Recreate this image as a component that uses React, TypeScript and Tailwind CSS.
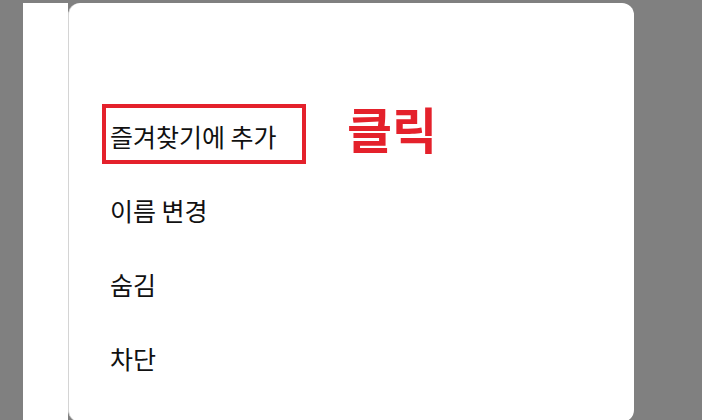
import React from "react";

const items = ["즐겨찾기에 추가", "이름 변경", "숨김", "차단"];

export default function App() {
  return (
    <div
      className="w-[702px] h-[420px] bg-[#808080] overflow-hidden flex items-start pt-[3px] pl-[23px]"
      style={{ fontFamily: '"Noto Sans CJK KR", "Noto Sans", sans-serif' }}
    >
      <div className="w-[45px] h-[430px] bg-white shrink-0" />
      <div className="relative w-[566px] h-[419px] shrink-0 bg-white rounded-[12px] border-l border-[#d4d4d4] pt-[96px] pl-[41px]">
        <div className="flex flex-col">
          {items.map((t) => (
            <div key={t} className="h-[74px] flex items-center text-[25px] text-[#111] leading-none">
              {t}
            </div>
          ))}
        </div>
        <div className="absolute left-[33px] top-[101px] w-[204px] h-[60px] border-[4px] border-[#e4212b]" />
        <div className="absolute left-[278px] top-[100px] text-[49px] font-bold text-[#e4212b] leading-none">
          클릭
        </div>
      </div>
    </div>
  );
}
